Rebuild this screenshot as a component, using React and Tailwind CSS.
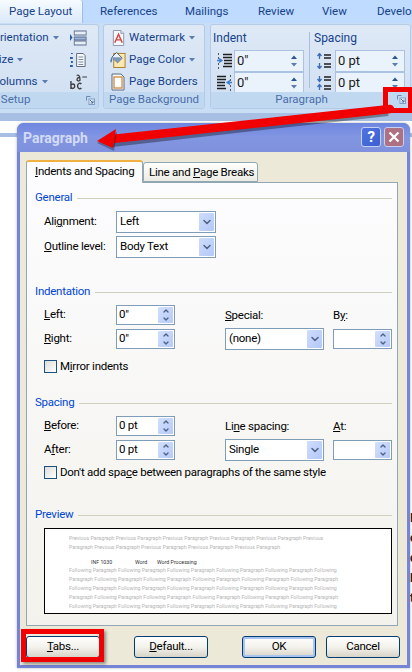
import React from 'react';
import { ChevronDown, ChevronUp } from 'lucide-react';

const FONT = 'font-["Roboto",sans-serif]';

const Ul = ({ children }) => <span className="underline underline-offset-1">{children}</span>;

const Caret = ({ className = '' }) => (
  <svg width="6" height="4" viewBox="0 0 6 4" className={className}><path d="M0 0h6L3 3.5z" fill="#5a7cae" /></svg>
);

function Launcher() {
  return (
    <svg width="9" height="9" viewBox="0 0 9 9" className="shrink-0">
      <path d="M.5.5h4M.5.5v4" stroke="#6d8ab3" fill="none" />
      <rect x="3" y="3" width="5.5" height="5.5" fill="#f1f6fc" stroke="#7f9dc4" />
      <path d="M4 4l3 3M7 4.5V7H4.5" stroke="#46689a" fill="none" />
    </svg>
  );
}

function OrientationIcon() {
  return (
    <svg width="17" height="16" viewBox="0 0 20 16" preserveAspectRatio="none">
      <path d="M0 4v7l3-3.500z" fill="#2a5aa0" />
      <rect x="5" y="1" width="14" height="4" fill="#e8eef8" stroke="#5c6f8c" />
      <rect x="5" y="7" width="14" height="3" fill="#9ab3d8" stroke="#5c6f8c" />
      <rect x="5" y="11" width="14" height="4" fill="#e8eef8" stroke="#5c6f8c" />
    </svg>
  );
}

function LineNumIcon() {
  return (
    <svg width="17" height="16" viewBox="0 0 18 16" preserveAspectRatio="none">
      <path d="M1 1h2v1H1zM0 5h3v2H0zM1 9h2v2H1zM0 13h3v2H0z" fill="#2f5d9e" />
      <path d="M7 1.500h7l2 2v11H7z" fill="#f4f7fb" stroke="#5e6b7f" />
      <path d="M9 5h5M9 7.500h5M9 10h5M9 12.500h5" stroke="#7c8797" />
    </svg>
  );
}

function HyphenIcon() {
  return (
    <svg width="17" height="16" viewBox="0 0 18 16" preserveAspectRatio="none">
      <path d="M1 7v8M1 11.500c1-2 4-2 4 .7s-3 2.800-4 .8M12 10c-1-1.300-4-1-4 2s3 3.300 4 2" stroke="#3f3f3f" strokeWidth="1.500" fill="none" />
      <path d="M7 1.500c2-1 4 0 3.500 5.500M10 3.500c-3 0-3.500 3.500-1 3.500 1 0 1.500-1 1.500-1.500" stroke="#3f3f3f" strokeWidth="1.300" fill="none" />
      <path d="M13 3h5" stroke="#3f3f3f" strokeWidth="1.200" />
    </svg>
  );
}

function WatermarkIcon() {
  return (
    <svg width="15" height="18" viewBox="0 0 16 18">
      <path d="M2.500 1h8l3 3v13h-11z" fill="#f6f8fc" stroke="#8b96a8" />
      <path d="M10.500 1v3h3" fill="#dfe6f0" stroke="#8b96a8" />
      <path d="M4 14l4-9 4 9M5.500 11h5" stroke="#d8453f" strokeWidth="1.500" fill="none" />
    </svg>
  );
}

function PageColorIcon() {
  return (
    <svg width="16" height="18" viewBox="0 0 17 18" className="-ml-[1px]">
      <rect x="4" y="2" width="12" height="15" fill="#fbe9b0" stroke="#a87b2c" />
      <path d="M7 1l6 6-5 5-6-6z" fill="#eef3fa" stroke="#44546c" />
      <path d="M2 6c-2 2-2 5-1 6 1-1 2-3 1-6z" fill="#4c78b8" />
      <path d="M2 6l6 6 5-5-3-1z" fill="#7d97bd" />
    </svg>
  );
}

function PageBordersIcon() {
  return (
    <svg width="14" height="18" viewBox="0 0 14 18">
      <path d="M1 1h9l3 3v13H1z" fill="#f5f7fb" stroke="#5b6a80" />
      <rect x="3" y="4" width="8" height="11" fill="#fff" stroke="#d48a3c" strokeWidth="1.300" />
    </svg>
  );
}

function IndentIcon({ flip }) {
  return (
    <svg width="17" height="16" viewBox="0 0 17 16" className={flip ? '-scale-x-100' : ''}>
      <path d="M7 1.500h9M7 4.500h9M8 7.500h8M8 10.500h8M7 13.500h9" stroke="#1f1f1f" strokeWidth="1.300" />
      <path d="M0 0v2M0 4v2M0 10v2M0 14v2" stroke="#555" transform="translate(2.500 0)" />
      <path d="M1 7.500h4M3 5.500l3 2-3 2" stroke="#3f7ad0" strokeWidth="1.300" fill="none" />
    </svg>
  );
}

function SpacingIcon({ flip }) {
  return (
    <svg width="16" height="16" viewBox="0 0 16 16">
      <path d="M8 2h7M8 5h7M8 11h7M8 14h7" stroke="#1f1f1f" strokeWidth="1.300" />
      {flip ? (
        <path d="M3.500 1v5M1.500 4l2 2.500 2-2.500M3.500 10v5M1.500 12l2-2.500 2 2.500" stroke="#3a6cb8" strokeWidth="1.300" fill="none" />
      ) : (
        <path d="M3.500 1v5M1.500 3l2-2.500 2 2.500M3.500 10v5M1.500 13l2 2.500 2-2.500" stroke="#3a6cb8" strokeWidth="1.300" fill="none" />
      )}
    </svg>
  );
}

function RibbonSpin({ value }) {
  return (
    <div className="flex-1 h-[22px] bg-[#eaf2fb] border border-[#abc3e0] flex items-center justify-between pl-[2px] pr-[6px] text-[13px] text-[#1a1a1a]">
      <span>{value}</span>
      <span className="flex flex-col gap-[4px]">
        <svg width="6" height="4" viewBox="0 0 6 4"><path d="M0 4h6L3 .5z" fill="#2a5590" /></svg>
        <Caret />
      </span>
    </div>
  );
}

function Row({ icon, label, caret }) {
  return (
    <div className="flex items-center h-[22px] gap-[3px] whitespace-nowrap">
      {icon && <span className="w-[15px] shrink-0 flex">{icon}</span>}
      <span>{label}</span>
      {caret && <Caret className="ml-[1px]" />}
    </div>
  );
}

function Group({ label, launcher, className = '', children, labelClass = '' }) {
  return (
    <div className={`flex flex-col h-[85px] rounded-[3px] border border-[#b3cbe7] bg-gradient-to-b from-[#dfe9f6] to-[#cfdff2] overflow-hidden ${className}`}>
      <div className="flex-1 min-h-0">{children}</div>
      <div className={`h-[16px] bg-[#c1d8f1] flex items-center text-[11.500px] text-[#4a6ea8] whitespace-nowrap ${labelClass}`}>
        <span>{label}</span>
        {launcher}
      </div>
    </div>
  );
}

function Ribbon() {
  const tabs = [
    ['References', 'w-[85px]'],
    ['Mailings', 'w-[73px]'],
    ['Review', 'w-[64px]'],
    ['View', 'w-[55px]'],
    ['Developer', 'w-[70px]'],
  ];
  return (
    <div className="bg-[#bfdbff] text-[#15428b]">
      <div className="flex h-[23px] text-[11.500px] whitespace-nowrap overflow-hidden">
        <div className="w-[83px] shrink-0 h-[23px] bg-gradient-to-b from-[#f6fbff] to-[#dbe9f8] border-r border-[#9ebfe4] rounded-tr-[3px] pl-[9px] leading-[22px]">Page Layout</div>
        {tabs.map(([t, w]) => (
          <div key={t} className={`${w} shrink-0 pl-[17px] leading-[22px]`}>{t}</div>
        ))}
      </div>
      <div className="h-[90px] bg-[#c9ddf5] pt-[1px] flex text-[11.500px] gap-[4px] -ml-[40px]">
        <Group
          label="Page Setup"
          className="w-[139px] shrink-0"
          labelClass="pl-[11px] justify-between pr-[3px]"
          launcher={<Launcher />}
        >
          <div className="flex pt-[2px] pl-[31px]">
            <div className="w-[78px] shrink-0">
              <Row label="Orientation" caret />
              <Row label="Size" caret />
              <Row label="Columns" caret />
            </div>
            <div className="w-[24px] shrink-0 [&>div>span:first-child]:w-[18px]">
              <Row icon={<OrientationIcon />} caret />
              <Row icon={<LineNumIcon />} caret />
              <Row icon={<HyphenIcon />} caret />
            </div>
          </div>
        </Group>
        <Group label="Page Background" className="w-[102px] shrink-0" labelClass="pl-[5px]">
          <div className="pt-[2px] pl-[7px]">
            <Row icon={<WatermarkIcon />} label="Watermark" caret />
            <Row icon={<PageColorIcon />} label="Page Color" caret />
            <Row icon={<PageBordersIcon />} label="Page Borders" />
          </div>
        </Group>
        <Group
          label="Paragraph"
          className="w-[201px] shrink-0 ml-[1px]"
          labelClass="relative justify-center pr-[18px]"
          launcher={<span className="absolute right-[4px] top-[3px] flex"><Launcher /></span>}
        >
          <div className="flex pt-[2px] pl-[2px]">
            <div className="w-[91px] shrink-0">
              <div className="h-[22px] leading-[22px] pb-[1px] text-[12px]">Indent</div>
              <div className="flex items-center gap-[1px] h-[23px] pl-[3px]"><IndentIcon /><RibbonSpin value={'0"'} /></div>
              <div className="flex items-center gap-[1px] h-[22px] pl-[3px]"><IndentIcon flip /><RibbonSpin value={'0"'} /></div>
            </div>
            <div className="w-[1px] h-[56px] bg-[#a9c0dc] ml-[5px] mr-[3px] mt-[5px] shrink-0" />
            <div className="flex-1 pl-[1px] pr-[5px]">
              <div className="h-[22px] leading-[22px] text-[12px]">Spacing</div>
              <div className="flex items-center gap-[3px] h-[23px] pl-[2px]"><SpacingIcon /><RibbonSpin value="0 pt" /></div>
              <div className="flex items-center gap-[3px] h-[22px] pl-[2px]"><SpacingIcon flip /><RibbonSpin value="0 pt" /></div>
            </div>
          </div>
        </Group>
      </div>
      <div className="h-[8px] bg-[#a6bfe2]" />
      <div className="h-[12px] bg-white" />
      <div className="h-[4px] bg-[#a6bfe2]" />
    </div>
  );
}

function SectionHead({ title }) {
  return (
    <div className="flex items-center h-[16px] pl-[8px] pr-[5px] gap-[5px]">
      <span className="text-[#0046d5] whitespace-nowrap">{title}</span>
      <div className="flex-1 h-[1px] bg-[#d0d0bf]" />
    </div>
  );
}

function Select({ value, className = 'w-[100px]' }) {
  return (
    <div className={`${className} h-[22px] bg-white border border-[#7f9db9] flex items-center justify-between pl-[3px] pr-[1px]`}>
      <span>{value}</span>
      <span className="w-[15px] h-[18px] bg-gradient-to-br from-[#cfdcfc] to-[#b3c8f8] rounded-[1px] flex items-center justify-center">
        <ChevronDown size={12} strokeWidth={3} className="text-[#4d6185]" />
      </span>
    </div>
  );
}

function Spin({ value }) {
  return (
    <div className="w-[59px] h-[20px] bg-white border border-[#7f9db9] flex items-center justify-between pl-[2px] pr-[1px]">
      <span>{value}</span>
      <span className="w-[15px] h-[16px] bg-gradient-to-br from-[#d3dffc] to-[#b6caf8] rounded-[1px] flex flex-col items-center justify-center">
        <ChevronUp size={8} strokeWidth={4} className="text-[#4d6185]" />
        <ChevronDown size={8} strokeWidth={4} className="text-[#4d6185]" />
      </span>
    </div>
  );
}

function Check({ children }) {
  return (
    <div className="flex items-center h-[13px] gap-[3px] whitespace-nowrap">
      <span className="w-[13px] h-[13px] border border-[#1c5180] bg-gradient-to-br from-[#dcdcd7] to-white shrink-0" />
      <span>{children}</span>
    </div>
  );
}

// two-row block shared by Indentation and Spacing
function SpinBlock({ a, av, b, bv, c, cv, d }) {
  return (
    <div className="ml-[17px] mt-[5px] flex">
      <div className="w-[131px] shrink-0 flex flex-col gap-[4px]">
        <div className="flex items-center h-[20px]"><span className="w-[72px]">{a}</span><Spin value={av} /></div>
        <div className="flex items-center h-[20px]"><span className="w-[72px]">{b}</span><Spin value={bv} /></div>
      </div>
      <div className="ml-[50px] w-[99px] shrink-0 flex flex-col gap-[4px]">
        <div className="h-[20px] flex items-center pt-[1px]">{c}</div>
        <div className="h-[20px] flex items-center"><Select value={cv} className="w-[99px] shrink-0" /></div>
      </div>
      <div className="ml-[9px] w-[59px] shrink-0 flex flex-col gap-[4px]">
        <div className="h-[20px] flex items-center pt-[1px]">{d}</div>
        <Spin value="" />
      </div>
    </div>
  );
}

const PREVIOUS = [
  'Previous Paragraph Previous Paragraph Previous Paragraph Previous Paragraph Previous Paragraph Previous',
  'Paragraph Previous Paragraph Previous Paragraph Previous Paragraph Previous Paragraph',
];
const FOLLOWING = [
  'Following Paragraph Following Paragraph Following Paragraph Following Paragraph Following Paragraph Following',
  'Paragraph Following Paragraph Following Paragraph Following Paragraph Following Paragraph Following Paragraph',
  'Following Paragraph Following Paragraph Following Paragraph Following Paragraph Following Paragraph Following',
  'Paragraph Following Paragraph Following Paragraph Following Paragraph Following Paragraph Following Paragraph',
  'Following Paragraph Following Paragraph Following Paragraph Following Paragraph Following Paragraph Following',
];

function Preview() {
  return (
    <div className="ml-[17px] mt-[5px] w-[348px] h-[86px] border border-black bg-white pl-[24px] pt-[5px] text-[5.250px] tracking-normal leading-[9px] whitespace-nowrap overflow-hidden">
      <div className="text-[#b4b4b4]">
        {PREVIOUS.map((l, i) => <div key={i}>{l}</div>)}
      </div>
      <div className="flex text-[#333] mt-[6px] h-[8px] leading-[8px] pl-[22px]">
        <span className="w-[44px]">INF 1030</span>
        <span className="w-[22px]">Word</span>
        <span>Word Processing</span>
      </div>
      <div className="text-[#b4b4b4]">
        {FOLLOWING.map((l, i) => <div key={i}>{l}</div>)}
      </div>
    </div>
  );
}

function DlgButton({ children, def }) {
  return (
    <button className={`w-[74px] h-[22px] rounded-[3px] border border-[#003c74] bg-gradient-to-b from-white via-[#f3f2ec] to-[#d8d4c8] text-black ${def ? 'shadow-[inset_0_0_0_2px_#a9c4f0]' : ''}`}>
      {children}
    </button>
  );
}

function Dialog() {
  return (
    <div className="absolute left-[17px] top-[123px] w-[393px] h-[545px] rounded-t-[7px] bg-[#7584d6] p-[3px] pt-0 flex flex-col text-[11.500px] tracking-[-0.25px] text-black shadow-[0_0_3px_rgba(0,0,0,0.3)]">
      <div className="h-[29px] shrink-0 flex items-center justify-between bg-gradient-to-b from-[#6f86e0] via-[#8296e2] to-[#7f90dc] -mx-[3px] px-[6px] rounded-t-[7px]">
        <span className="font-bold text-[14px] tracking-normal text-[#d3dbf7] pt-[2px]">Paragraph</span>
        <div className="flex gap-[3px] -mt-[1px]">
          <span className="w-[20px] h-[20px] rounded-[3px] border border-[#c4d0f4] bg-gradient-to-br from-[#4f74e0] to-[#3c5fd0] text-white font-bold text-[15px] leading-[18px] text-center">?</span>
          <span className="w-[20px] h-[20px] rounded-[3px] border border-[#c4d0f4] bg-[#ae7182] flex items-center justify-center">
            <svg width="12" height="12" viewBox="0 0 12 12"><path d="M1.500 1.500l9 9M10.500 1.500l-9 9" stroke="#fff" strokeWidth="2.200" /></svg>
          </span>
        </div>
      </div>
      <div className="flex-1 bg-[#ece9d8] px-[6px] pt-[7px] flex flex-col">
        <div className="flex items-end h-[23px] relative z-10">
          <div className="w-[117px] h-[23px] -mb-[1px] bg-[#fcfcfe] border border-[#91a7b4] border-b-0 rounded-t-[3px] border-t-[2px] border-t-[#f0b042] pl-[8px] leading-[19px] whitespace-nowrap">
            <Ul>I</Ul>ndents and Spacing
          </div>
          <div className="w-[115px] h-[20px] bg-gradient-to-b from-white to-[#ecebe4] border border-[#91a7b4] rounded-t-[3px] pl-[5px] leading-[18px] whitespace-nowrap">
            Line and <Ul>P</Ul>age Breaks
          </div>
        </div>
        <div className="w-[372px] h-[444px] shrink-0 border border-[#91a7b4] bg-gradient-to-b from-[#fcfcfe] to-[#f3f2ec] pt-[7px]">
          <SectionHead title="General" />
          <div className="ml-[17px] mt-[5px] flex flex-col gap-[3px]">
            <div className="flex items-center"><span className="w-[72px]">Ali<Ul>g</Ul>nment:</span><Select value="Left" /></div>
            <div className="flex items-center"><span className="w-[72px] whitespace-nowrap"><Ul>O</Ul>utline level:</span><Select value="Body Text" /></div>
          </div>

          <div className="mt-[26px]"><SectionHead title="Indentation" /></div>
          <SpinBlock
            a={<><Ul>L</Ul>eft:</>}
            av={'0"'}
            b={<><Ul>R</Ul>ight:</>}
            bv={'0"'}
            c={<><Ul>S</Ul>pecial:</>}
            cv="(none)"
            d={<>B<Ul>y</Ul>:</>}
          />
          <div className="ml-[17px] mt-[11px]"><Check><>M<Ul>i</Ul>rror indents</></Check></div>

          <div className="mt-[22px]"><SectionHead title="Spacing" /></div>
          <SpinBlock
            a={<><Ul>B</Ul>efore:</>}
            av="0 pt"
            b={<>A<Ul>f</Ul>ter:</>}
            bv="0 pt"
            c={<>Li<Ul>n</Ul>e spacing:</>}
            cv="Single"
            d={<><Ul>A</Ul>t:</>}
          />
          <div className="ml-[17px] mt-[6px]"><Check><>Don't add spa<Ul>c</Ul>e between paragraphs of the same style</></Check></div>

          <div className="mt-[28px]"><SectionHead title="Preview" /></div>
          <Preview />
        </div>
        <div className="flex mt-[10px] w-[374px]">
          <DlgButton><Ul>T</Ul>abs...</DlgButton>
          <div className="ml-[34px]"><DlgButton><Ul>D</Ul>efault...</DlgButton></div>
          <div className="ml-[34px]"><DlgButton def>OK</DlgButton></div>
          <div className="ml-[10px]"><DlgButton>Cancel</DlgButton></div>
        </div>
      </div>
    </div>
  );
}

function Annotations() {
  return (
    <>
      <svg width="412" height="672" viewBox="0 0 412 672" className="absolute left-0 top-0 pointer-events-none">
        <path d="M388 112L112 143" stroke="#000" strokeOpacity="0.35" strokeWidth="8" />
        <path d="M390 109L112 139" stroke="#f00000" strokeWidth="8.500" strokeLinecap="round" />
        <path d="M96 141L116 130L113 149z" fill="#000" fillOpacity="0.3" transform="translate(1 2)" />
        <path d="M97 141L116 129L113 148z" fill="#f00000" />
      </svg>
      <div className="absolute left-[383px] top-[87px] w-[30px] h-[26px] border-[5px] border-[#f00000]" />
      <div className="absolute left-[21px] top-[629px] w-[83px] h-[33px] border-[5px] border-[#f00000] shadow-[2px_2px_3px_rgba(0,0,0,0.4)]" />
    </>
  );
}

export default function App() {
  return (
    <div className={`relative w-[412px] h-[672px] overflow-hidden bg-white ${FONT}`}>
      <Ribbon />
      {/* clipped document text to the right of the dialog */}
      <div className="absolute left-[410px] top-[508px] flex flex-col text-[12px] leading-[20px] font-bold text-[#222]">
        <span>I</span>
        <span>e</span>
        <span>c</span>
        <span>L</span>
        <span>t</span>
      </div>
      <Dialog />
      <Annotations />
    </div>
  );
}
